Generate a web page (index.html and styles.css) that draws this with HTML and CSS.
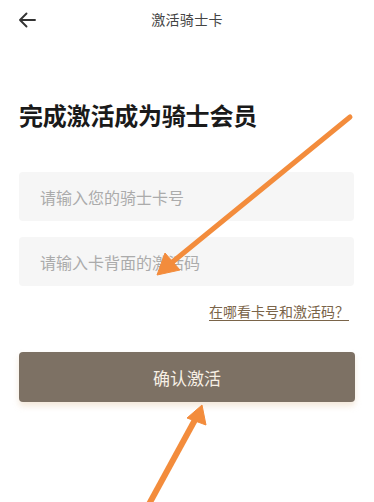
FILE: index.html
```html
<!DOCTYPE html>
<html lang="zh">
<head>
<meta charset="utf-8">
<link rel="stylesheet" href="styles.css">
</head>
<body>
<div class="page">
  <header class="topbar">
    <span class="back">
      <svg width="20" height="18" viewBox="0 0 20 18"><path d="M18 9H3M9.5 2.5L3 9l6.5 6.5" fill="none" stroke="#333" stroke-width="1.9" stroke-linecap="round" stroke-linejoin="round"/></svg>
    </span>
    <span class="title">激活骑士卡</span>
    <span></span>
  </header>
  <main class="content">
    <h1 class="heading">完成激活成为骑士会员</h1>
    <div class="fields">
      <div class="field">请输入您的骑士卡号</div>
      <div class="field">请输入卡背面的激活码</div>
    </div>
    <div class="help"><span class="help-link">在哪看卡号和激活码？</span></div>
    <button class="confirm">确认激活</button>
  </main>
  <svg class="arrows" width="374" height="502" viewBox="0 0 374 502">
    <g fill="#f38c3c" stroke="#f38c3c">
      <line x1="350" y1="117" x2="170" y2="264" stroke-width="5" stroke-linecap="round"/>
      <polygon points="157,275 165,253 180,270" stroke-width="1" stroke-linejoin="round"/>
      <line x1="148" y1="506" x2="196" y2="418" stroke-width="6"/>
      <polygon points="202,405 187,418 206,425" stroke-width="1" stroke-linejoin="round"/>
    </g>
  </svg>
</div>
</body>
</html>
```

FILE: styles.css
```css
html, body {
  margin: 0;
  padding: 0;
  background: #fff;
}
body {
  font-family: "Noto Sans CJK SC", "Noto Sans", sans-serif;
}
.page {
  position: relative;
  width: 374px;
  height: 502px;
  overflow: hidden;
}
.topbar {
  height: 40px;
  display: grid;
  grid-template-columns: 1fr auto 1fr;
  align-items: center;
  padding: 0 18px;
}
.back {
  display: flex;
  align-items: center;
  margin-left: -1px;
}
.title {
  font-size: 14px;
  color: #444;
  letter-spacing: 0.3px;
  margin-top: -3px;
}
.content {
  padding: 0 19px 0 19px;
}
.heading {
  margin: 59px 0 0 0;
  font-size: 24px;
  line-height: 32px;
  font-weight: 700;
  color: #1a1a1a;
  letter-spacing: -0.2px;
}
.fields {
  margin-top: 41px;
  display: flex;
  flex-direction: column;
  gap: 16px;
}
.field {
  height: 49px;
  background: #f6f6f6;
  border-radius: 4px;
  display: flex;
  align-items: center;
  padding-left: 21px;
  font-size: 16px;
  color: #ababab;
  margin-right: 1px;
}
.help {
  margin-top: 15px;
  display: flex;
  justify-content: flex-end;
  padding-right: 6px;
  height: 20px;
  align-items: center;
}
.help-link {
  font-size: 14px;
  color: #7a6449;
  text-decoration: underline;
  text-underline-offset: 3px;
  text-decoration-thickness: 1px;
}
.confirm {
  display: block;
  width: 100%;
  margin-top: 31px;
  height: 50px;
  border: none;
  border-radius: 4px;
  background: #7d7164;
  color: #f6efe4;
  font-family: "Noto Sans CJK SC", "Noto Sans", sans-serif;
  font-size: 17px;
  box-shadow: 0 4px 6px rgba(220, 190, 150, 0.35);
  margin-right: 1px;
}
.arrows {
  position: absolute;
  left: 0;
  top: 0;
  pointer-events: none;
}
```
